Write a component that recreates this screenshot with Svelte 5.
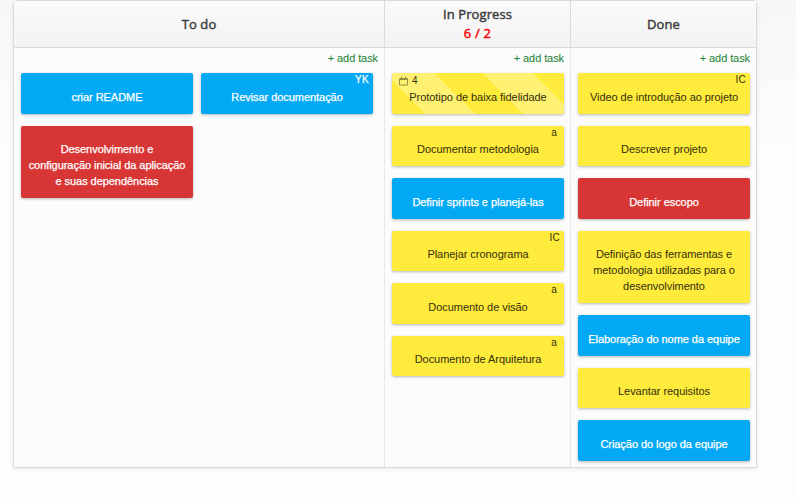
<script>
  const columns = [
    { name: 'To do', wide: true, tasks: [
      { t: ['criar README'], c: 'blue' },
      { t: ['Revisar documentação'], c: 'blue', who: 'YK' },
      { t: ['Desenvolvimento e', 'configuração inicial da aplicação', 'e suas dependências'], c: 'red' }
    ] },
    { name: 'In Progress', limit: '6 / 2', tasks: [
      { t: ['Prototipo de baixa fidelidade'], c: 'yellow', due: '4' },
      { t: ['Documentar metodologia'], c: 'yellow', who: 'a' },
      { t: ['Definir sprints e planejá-las'], c: 'blue' },
      { t: ['Planejar cronograma'], c: 'yellow', who: 'IC' },
      { t: ['Documento de visão'], c: 'yellow', who: 'a' },
      { t: ['Documento de Arquitetura'], c: 'yellow', who: 'a' }
    ] },
    { name: 'Done', tasks: [
      { t: ['Video de introdução ao projeto'], c: 'yellow', who: 'IC' },
      { t: ['Descrever projeto'], c: 'yellow' },
      { t: ['Definir escopo'], c: 'red' },
      { t: ['Definição das ferramentas e', 'metodologia utilizadas para o', 'desenvolvimento'], c: 'yellow' },
      { t: ['Elaboração do nome da equipe'], c: 'blue' },
      { t: ['Levantar requisitos'], c: 'yellow' },
      { t: ['Criação do logo da equipe'], c: 'blue' }
    ] }
  ];
</script>

<main>
  <div class="board">
    {#each columns as col}
      <section class:wide={col.wide}>
        <header>
          <span>{col.name}</span>
          {#if col.limit}<span class="limit">{col.limit}</span>{/if}
        </header>
        <div class="body">
          <div class="add">+ add task</div>
          <div class="cards">
            {#each col.tasks as task}
              <article class={task.c} class:striped={task.due}>
                {#if task.who}<span class="who" class:single={task.who === 'a'}>{task.who}</span>{/if}
                {#if task.due}
                  <span class="due">
                    <svg width="9" height="10" viewBox="0 0 9 10" fill="none" stroke="currentColor">
                      <path d="M.5 2.500h8v6.500h-8zM.5 3.500h8M2.500 .5v2M6.500 .5v2" />
                    </svg>
                    {task.due}
                  </span>
                {/if}
                {#each task.t as line}<div class="line">{line}</div>{/each}
              </article>
            {/each}
          </div>
        </div>
      </section>
    {/each}
  </div>
</main>

<style>
  :global(body) { margin: 0; overflow: hidden; }
  main {
    box-sizing: border-box;
    height: 502px;
    padding-left: 13px;
    background: linear-gradient(#f7f7f7, #fdfdfd 160px);
    font-family: "Liberation Sans", Arial, sans-serif;
    font-size: 11px;
  }
  .board {
    box-sizing: border-box;
    display: flex;
    width: 744px;
    height: 468px;
    border: 1px solid #dadada;
    border-radius: 4px 4px 0 0;
    background: #fcfcfc;
    box-shadow: 0 1px 4px rgba(0, 0, 0, .08);
  }
  section { width: 186px; display: flex; flex-direction: column; }
  section.wide { width: 370px; }
  header {
    box-sizing: border-box;
    height: 47px;
    display: flex;
    flex-direction: column;
    align-items: center;
    justify-content: center;
    border-bottom: 1px solid #dadada;
    background: linear-gradient(#fafafa, #f3f3f3);
    color: #3c3c3c;
    font: 400 13px/19px "Open Sans", sans-serif;
    letter-spacing: .1px;
    -webkit-text-stroke: .45px currentColor;
  }
  section + section header { border-left: 1px solid #dadada; }
  .limit { color: #f00; letter-spacing: .2px; }
  .body { flex: 1; padding-left: 7px; }
  section + section .body { border-left: 1px dotted #d5d5d5; }
  .add {
    height: 25.2px;
    padding-right: 6px;
    line-height: 21px;
    text-align: right;
    letter-spacing: -.08px;
    color: #17812f;
  }
  .cards { display: flex; flex-wrap: wrap; gap: 12px 8px; }
  article {
    position: relative;
    box-sizing: border-box;
    width: 172px;
    padding: 15.75px 0 8.75px;
    border-radius: 2px;
    box-shadow: 0 1px 3px rgba(0, 0, 0, .28);
    text-align: center;
    color: #fff;
  }
  .line { line-height: 16px; white-space: nowrap; letter-spacing: -.05px; }
  .yellow { background-color: #ffeb3b; color: #33300c; }
  .blue { background-color: #03a9f4; }
  .red { background-color: #d83634; }
  .blue, .red { -webkit-text-stroke: .25px #fff; }
  .striped {
    background-image: linear-gradient(45deg,
      transparent 24px, rgba(255, 255, 255, .28) 24px 58.7px,
      transparent 58.7px 93.3px, rgba(255, 255, 255, .28) 93.3px 128px,
      transparent 128px);
  }
  .who { position: absolute; top: 0; right: 4px; font-size: 10px; line-height: 13px; letter-spacing: .3px; }
  .who.single { right: 7px; }
  .due {
    position: absolute;
    top: 2px;
    left: 7px;
    display: flex;
    gap: 4px;
    font-size: 10px;
    line-height: 12px;
  }
  .due svg { margin-top: 1px; opacity: .5; }
</style>
